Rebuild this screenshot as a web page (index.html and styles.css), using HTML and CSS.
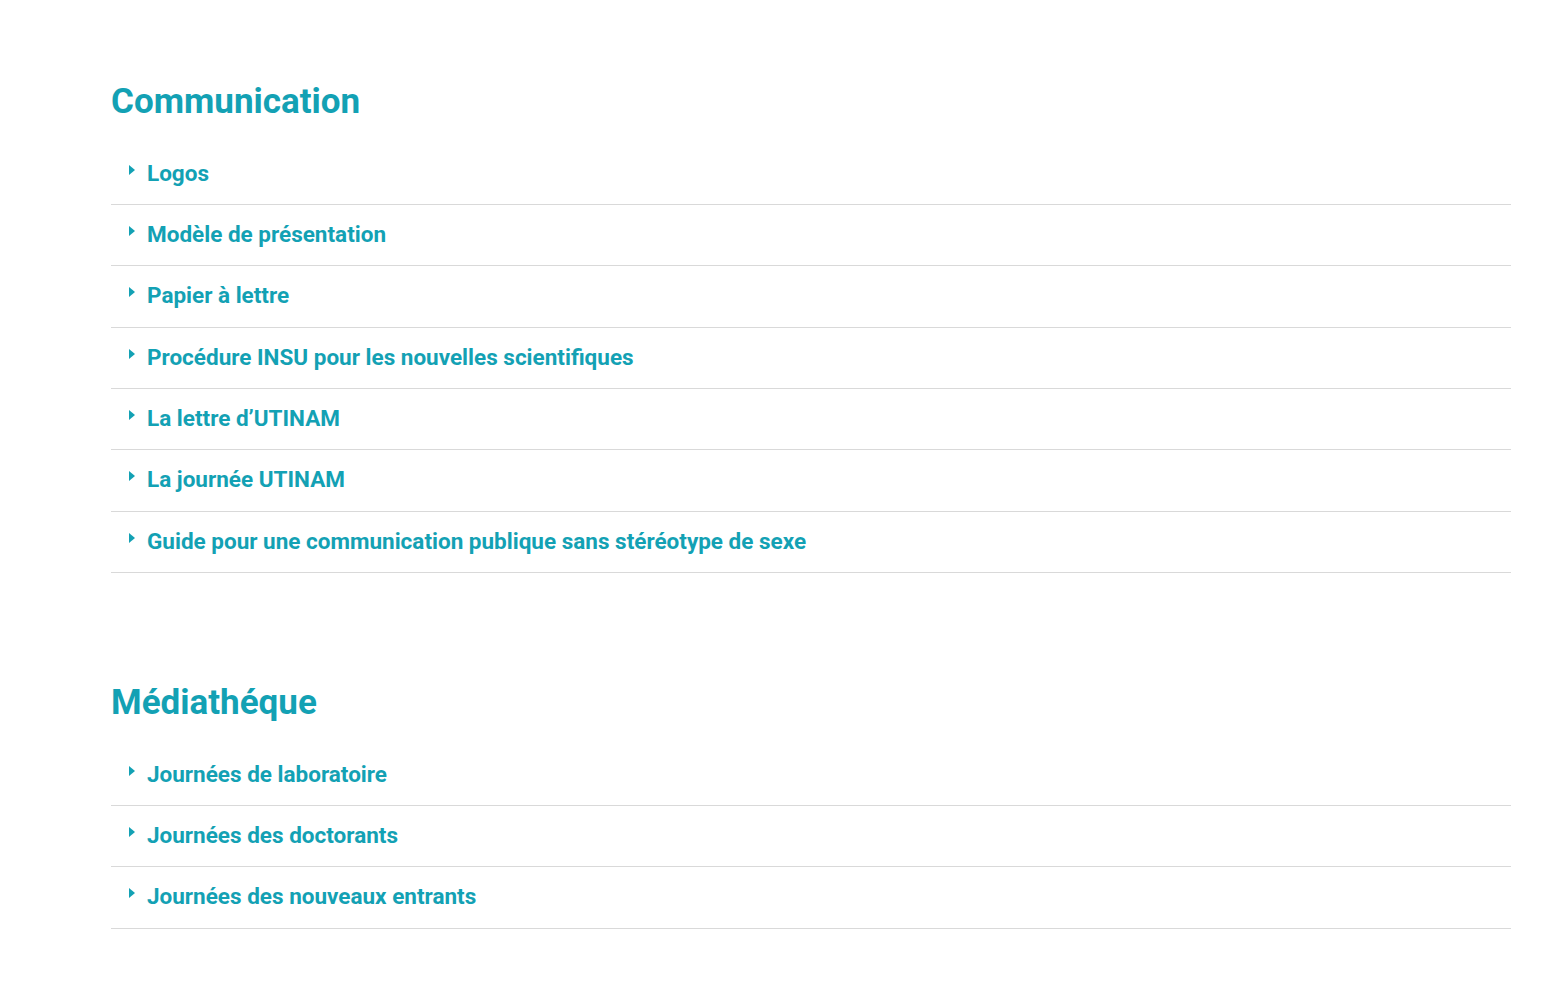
FILE: index.html
```html
<!DOCTYPE html>
<html lang="fr">
<head>
<meta charset="utf-8">
<title>Communication</title>
<link rel="stylesheet" href="styles.css">
</head>
<body>
<main class="page">
  <section class="block">
    <h2 class="block-title">Communication</h2>
    <ul class="links">
      <li class="link-row"><a class="link" href="#"><span class="caret"></span>Logos</a></li>
      <li class="link-row"><a class="link" href="#"><span class="caret"></span>Modèle de présentation</a></li>
      <li class="link-row"><a class="link" href="#"><span class="caret"></span>Papier à lettre</a></li>
      <li class="link-row"><a class="link" href="#"><span class="caret"></span>Procédure INSU pour les nouvelles scientifiques</a></li>
      <li class="link-row"><a class="link" href="#"><span class="caret"></span>La lettre d’UTINAM</a></li>
      <li class="link-row"><a class="link" href="#"><span class="caret"></span>La journée UTINAM</a></li>
      <li class="link-row"><a class="link" href="#"><span class="caret"></span>Guide pour une communication publique sans stéréotype de sexe</a></li>
    </ul>
  </section>
  <section class="block">
    <h2 class="block-title">Médiathéque</h2>
    <ul class="links">
      <li class="link-row"><a class="link" href="#"><span class="caret"></span>Journées de laboratoire</a></li>
      <li class="link-row"><a class="link" href="#"><span class="caret"></span>Journées des doctorants</a></li>
      <li class="link-row"><a class="link" href="#"><span class="caret"></span>Journées des nouveaux entrants</a></li>
    </ul>
  </section>
</main>
</body>
</html>
```
FILE: styles.css
```css
html, body {
  margin: 0;
  padding: 0;
  background: #ffffff;
}
body {
  font-family: Roboto, "Liberation Sans", sans-serif;
  color: #13a1b4;
}
.page {
  width: 1400px;
  margin-left: 111px;
  padding-top: 81px;
  display: flex;
  flex-direction: column;
  gap: 109px;
}
.block-title {
  margin: 0 0 21px 0;
  font-size: 35px;
  font-weight: 700;
  line-height: 42px;
  color: #13a1b4;
}
.links {
  list-style: none;
  margin: 0;
  padding: 0;
}
.link-row {
  border-bottom: 1px solid #d9d9d9;
  height: 60px;
  display: flex;
  align-items: center;
}
.link-row + .link-row {
  height: 60.33px;
}
.link {
  display: flex;
  align-items: center;
  padding-left: 18px;
  padding-bottom: 2px;
  font-size: 22.5px;
  font-weight: 700;
  color: #13a1b4;
  text-decoration: none;
}
.caret {
  width: 0;
  height: 0;
  border-top: 5px solid transparent;
  border-bottom: 5px solid transparent;
  border-left: 6px solid #13a1b4;
  margin-right: 12px;
  margin-top: -6px;
}
```
